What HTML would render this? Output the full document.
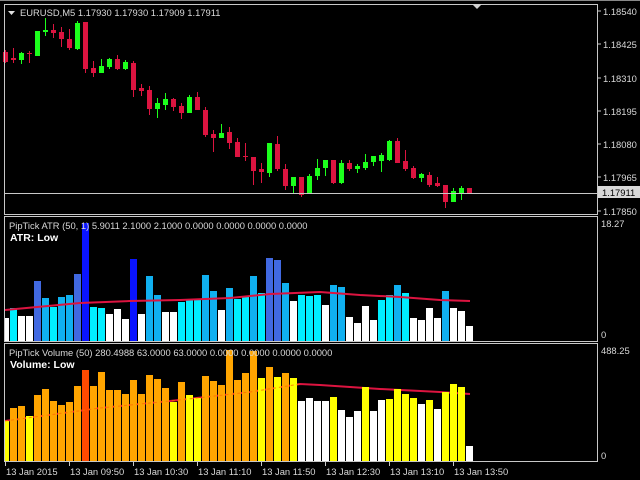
<!DOCTYPE html>
<html><head><meta charset="utf-8"><style>
html,body{margin:0;padding:0;background:#000;width:640px;height:480px;overflow:hidden}
svg{display:block}
text{font-family:"Liberation Sans",sans-serif;font-size:9.4px;fill:#d8d8d8}
</style></head><body>
<svg id="s" width="640" height="480" xmlns="http://www.w3.org/2000/svg">
<rect width="640" height="480" fill="#000"/>
<line x1="0" y1="0.5" x2="640" y2="0.5" stroke="#888"/>
<g id="g"></g>
<g stroke="#c8c8c8" fill="none" stroke-width="1">
<rect x="4.5" y="4.5" width="593" height="210"/>
<rect x="4.5" y="216.5" width="593" height="125"/>
<rect x="4.5" y="343.5" width="593" height="118"/>
</g>
<line x1="5" y1="193.5" x2="597" y2="193.5" stroke="#c8c8c8"/>
<polygon points="472,4 482,4 477,9" fill="#d0d0d0"/>
<polygon points="8,11 15,11 11.5,15" fill="#e0e0e0"/>
<text x="20" y="16">EURUSD,M5  1.17930 1.17930 1.17909 1.17911</text>
<g stroke="#c8c8c8">
<line x1="597" y1="11" x2="601" y2="11"/><line x1="597" y1="44" x2="601" y2="44"/>
<line x1="597" y1="78" x2="601" y2="78"/><line x1="597" y1="111" x2="601" y2="111"/>
<line x1="597" y1="144" x2="601" y2="144"/><line x1="597" y1="177" x2="601" y2="177"/>
<line x1="597" y1="211" x2="601" y2="211"/>
</g>
<text x="603" y="15">1.18540</text>
<text x="603" y="48">1.18425</text>
<text x="603" y="82">1.18310</text>
<text x="603" y="115">1.18195</text>
<text x="603" y="148">1.18080</text>
<text x="603" y="181">1.17965</text>
<rect x="598" y="186" width="42" height="12" fill="#d8d8d8"/>
<text x="602" y="196" style="fill:#000">1.17911</text>
<text x="603" y="215">1.17850</text>
<text x="601" y="227">18.27</text>
<text x="601" y="338">0</text>
<text x="601" y="354">488.25</text>
<text x="601" y="459">0</text>
<text x="9" y="229">PipTick ATR  (50, 1) 5.9011 2.1000 2.1000 0.0000 0.0000 0.0000 0.0000</text>
<text x="10" y="241" style="font-weight:bold;font-size:10.5px;fill:#fff">ATR:    Low</text>
<text x="9" y="356">PipTick Volume  (50) 280.4988 63.0000 63.0000 0.0000 0.0000 0.0000 0.0000</text>
<text x="10" y="368" style="font-weight:bold;font-size:10.5px;fill:#fff">Volume:  Low</text>
<g id="dates"></g>
</svg>
<script>
var g=document.getElementById('g'),h='';
var C=[[52,62,50,63,0],[58,60,48,63,0],[53,60,52,64,1],[53,54,51,63,0],[31,56,31,56,1],[30,32,18,36,1],[30,33,24,38,0],[32,39,27,47,0],[39,48,29,50,0],[23,49,21,50,1],[22,69,22,73,0],[68,73,61,77,0],[66,73,59,73,1],[59,67,58,69,1],[59,69,55,70,0],[62,69,60,70,1],[63,90,61,97,0],[88,91,84,96,0],[90,109,86,115,0],[103,109,98,118,1],[99,105,93,110,1],[99,107,98,111,0],[106,113,103,119,0],[97,113,95,113,1],[97,110,92,110,0],[110,135,107,137,0],[134,138,130,152,0],[133,138,124,138,1],[132,143,127,149,0],[142,157,138,157,0],[156,157,143,161,0],[157,171,157,185,0],[169,172,163,183,0],[143,173,143,177,1],[144,169,136,171,0],[169,186,164,190,0],[177,186,177,194,1],[177,195,177,197,0],[176,194,174,194,1],[168,176,159,180,1],[160,168,160,176,1],[160,183,160,184,0],[163,183,160,184,1],[163,169,160,171,0],[166,169,164,173,1],[162,168,154,170,1],[156,162,156,166,1],[155,161,153,172,1],[141,160,140,161,1],[141,163,138,163,0],[161,169,150,171,0],[168,178,166,179,0],[174,178,173,182,1],[175,185,172,187,0],[183,186,177,187,0],[185,202,185,208,0],[191,202,188,202,1],[188,193,186,200,1],[188,194,188,194,0]];
C.forEach(function(c,k){var x=2+8*k,col=c[4]?'#1cff1c':'#dc1440';
h+='<rect x="'+(x+3)+'" y="'+c[2]+'" width="1" height="'+(c[3]-c[2])+'" fill="'+col+'"/>';
h+='<rect x="'+(x+1)+'" y="'+c[0]+'" width="5" height="'+Math.max(1,c[1]-c[0])+'" fill="'+col+'"/>';});
var W='#fff',Cy='#00eeff',D='#10b0f0',R='#4169e1',B='#0a14ff';
var A=[[318,W],[308,Cy],[316,W],[316,W],[281,R],[298,D],[307,Cy],[297,D],[295,D],[274,R],[223,B],[307,Cy],[308,Cy],[314,W],[309,W],[319,W],[259,B],[314,W],[276,D],[295,D],[312,W],[312,W],[302,Cy],[299,Cy],[299,Cy],[275,D],[291,D],[310,W],[288,D],[299,Cy],[297,Cy],[276,D],[293,Cy],[258,R],[260,R],[283,D],[301,W],[295,Cy],[296,Cy],[295,Cy],[305,W],[285,D],[287,D],[317,W],[323,W],[306,W],[320,W],[300,Cy],[295,Cy],[285,D],[293,Cy],[318,W],[320,W],[308,W],[318,W],[291,D],[308,W],[311,W],[326,W]];
A.forEach(function(a,k){var x=Math.max(5,2+8*k),w=2+8*k+7-x;h+='<rect x="'+x+'" y="'+a[0]+'" width="'+w+'" height="'+(341-a[0])+'" fill="'+a[1]+'"/>';});
h+='<polyline points="5,310 80,303 130,301 180,300 230,298 270,294 320,292 360,295 400,297 440,300 470,301" fill="none" stroke="#dc1440" stroke-width="2"/>';
var O='#ffa500',Y='#ffff00',X='#ff4a00';
var V=[[421,Y],[408,O],[406,O],[416,Y],[395,O],[389,O],[401,O],[405,O],[402,O],[386,O],[370,X],[386,O],[372,O],[390,O],[390,O],[394,O],[380,O],[394,O],[375,O],[379,O],[388,O],[402,Y],[382,O],[395,Y],[398,Y],[376,O],[381,O],[385,O],[350,O],[380,O],[373,O],[351,O],[378,Y],[367,O],[377,Y],[373,O],[378,Y],[401,W],[398,W],[401,W],[401,W],[397,Y],[410,W],[417,W],[411,W],[387,Y],[411,W],[400,W],[399,Y],[389,Y],[394,Y],[398,Y],[404,W],[400,Y],[409,W],[392,Y],[384,Y],[387,Y],[446,W]];
h+='<polyline points="5,421 100,408 170,401 250,392 300,384 320,385 380,389 440,392 470,394" fill="none" stroke="#dc1440" stroke-width="2"/>';
V.forEach(function(a,k){var x=Math.max(5,2+8*k),w=2+8*k+7-x;h+='<rect x="'+x+'" y="'+a[0]+'" width="'+w+'" height="'+(462-a[0])+'" fill="'+a[1]+'"/>';});
h+='<polyline points="5,421 100,408 170,401 250,392 300,384" fill="none" stroke="#ff6a00" stroke-width="1" stroke-dasharray="3,3" opacity="0.8"/>';
g.innerHTML=h;
var L=['13 Jan 2015','13 Jan 09:50','13 Jan 10:30','13 Jan 11:10','13 Jan 11:50','13 Jan 12:30','13 Jan 13:10','13 Jan 13:50'],d='';
L.forEach(function(t,i){var x=5+64*i;d+='<line x1="'+(x+0.5)+'" y1="462" x2="'+(x+0.5)+'" y2="466" stroke="#c8c8c8"/><text x="'+(x+1)+'" y="475">'+t+'</text>';});
document.getElementById('dates').innerHTML=d;
</script>
</body></html>
